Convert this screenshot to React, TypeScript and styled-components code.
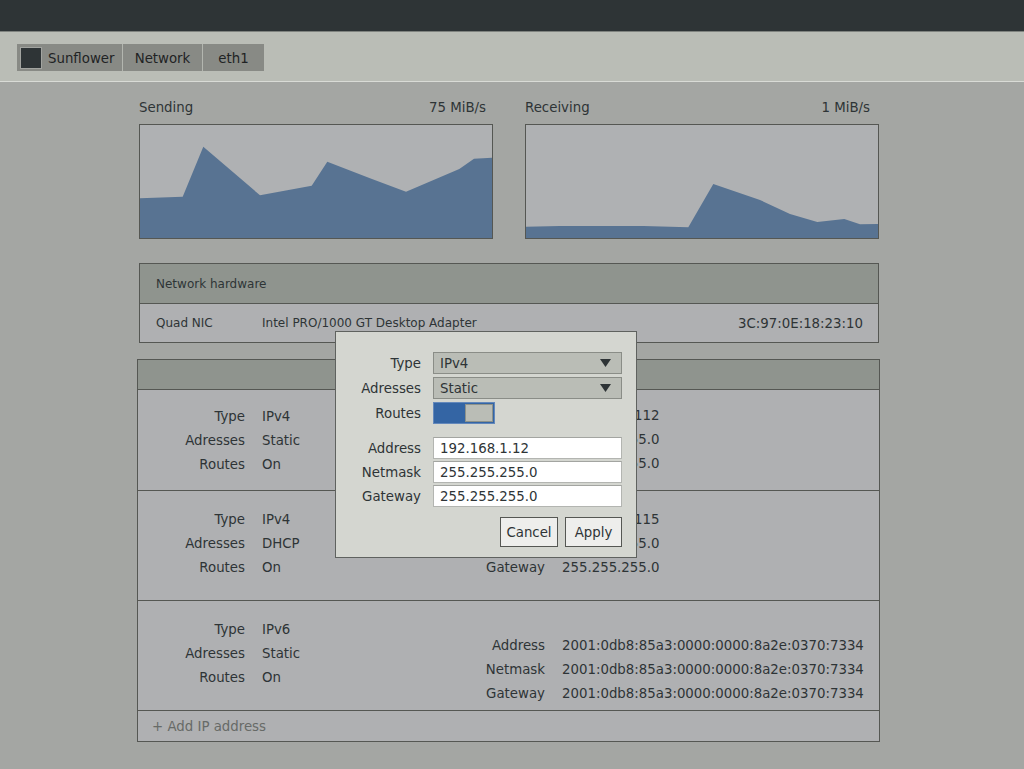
import React from "react";
import styled, { createGlobalStyle } from "styled-components";

const FS = "13.33px";

const Global = createGlobalStyle`
  html, body { margin: 0; padding: 0; background: #a4a6a3; }
  body {
    font-family: "DejaVu Sans", "Liberation Sans", sans-serif;
    color: #2e3436;
    font-size: ${FS};
    min-height: 769px;
  }
  * { box-sizing: border-box; }
`;

const Page = styled.div`
  position: relative;
  min-height: 769px;
  background: #a4a6a3;
`;

const TopBar = styled.div`
  height: 32px;
  background: #2e3436;
  border-bottom: 1px solid #7f837f;
`;

const Toolbar = styled.div`
  height: 50px;
  background: #babdb6;
  border-bottom: 1px solid #d9dbd6;
  padding: 12px 0 0 17px;
`;

const Crumbs = styled.div`
  display: flex;
  height: 27px;
`;

const Crumb = styled.div<{ $w: number; $first?: boolean }>`
  width: ${(p) => p.$w}px;
  height: 27px;
  background: #888a85;
  display: flex;
  align-items: center;
  justify-content: ${(p) => (p.$first ? "flex-start" : "center")};
  padding-left: ${(p) => (p.$first ? "3px" : "0")};
  padding-top: 2px;
  gap: 6px;
  border-left: ${(p) => (p.$first ? "none" : "1px solid #b3b6af")};
  font-size: ${FS};
  color: #1f2324;
`;

const Square = styled.div`
  width: 22px;
  height: 22px;
  margin-top: -2px;
  background: #2e3436;
  border: 1px solid #a2a4a0;
`;

const Content = styled.div`
  padding: 18px 0 0 139px;
  width: ${139 + 740}px;
`;

const Charts = styled.div`
  display: grid;
  grid-template-columns: 354px 354px;
  column-gap: 32px;
`;

const ChartHead = styled.div<{ $pr: number }>`
  display: flex;
  justify-content: space-between;
  height: 16px;
  line-height: 16px;
  padding-right: ${(p) => p.$pr}px;
  margin-bottom: 8px;
  font-size: ${FS};
`;

const ChartBox = styled.div`
  height: 115px;
  border: 1px solid #555753;
  background: #afb1b3;
  svg { display: block; width: 100%; height: 100%; }
`;

const HwTable = styled.div`
  margin-top: 24px;
  border: 1px solid #555753;
  font-size: 12px;
`;

const HwHeader = styled.div`
  height: 40px;
  background: #8f948e;
  border-bottom: 1px solid #555753;
  display: flex;
  align-items: center;
  padding-left: 16px;
`;

const HwRow = styled.div`
  height: 38px;
  background: #afb0b2;
  display: grid;
  grid-template-columns: 106px 1fr auto;
  align-items: center;
  padding: 0 15px 0 16px;
`;

const Mac = styled.span`
  font-size: ${FS};
`;

const IpTable = styled.div`
  margin: 16px -1px 0 -2px;
  border: 1px solid #555753;
`;

const IpHeader = styled.div`
  height: 30px;
  background: #8f948e;
  border-bottom: 1px solid #555753;
`;

const IpRow = styled.div<{ $h: number; $pt: number }>`
  height: ${(p) => p.$h}px;
  background: #afb0b2;
  border-bottom: 1px solid #555753;
  padding-top: ${(p) => p.$pt}px;
  display: flex;
  align-items: flex-start;
`;

const LeftBlock = styled.div`
  width: 322px;
  padding-left: 11px;
  display: grid;
  grid-template-columns: 96px auto;
  column-gap: 17px;
`;

const RightBlock = styled.div<{ $mt: number }>`
  margin-top: ${(p) => p.$mt}px;
  display: grid;
  grid-template-columns: 85px auto;
  column-gap: 17px;
`;

const Key = styled.div`
  text-align: right;
  line-height: 24px;
  height: 24px;
`;

const Val = styled.div`
  line-height: 24px;
  height: 24px;
  white-space: nowrap;
`;

const Footer = styled.div`
  height: 30px;
  background: #afb0b2;
  display: flex;
  align-items: center;
  padding-left: 14px;
  color: #676a67;
`;

const Dialog = styled.div`
  position: absolute;
  left: 335px;
  top: 331px;
  width: 302px;
  background: #d4d6d0;
  border: 1px solid #5f625f;
  padding: 20px 14px 10px 0;
`;

const FieldRow = styled.div<{ $mb: number }>`
  display: grid;
  grid-template-columns: 85px 189px;
  column-gap: 12px;
  align-items: center;
  height: 22px;
  margin-bottom: ${(p) => p.$mb}px;
`;

const FieldLabel = styled.div`
  text-align: right;
  font-size: ${FS};
`;

const Select = styled.div`
  height: 22px;
  background: #babdb6;
  border: 1px solid #8a8d87;
  display: flex;
  align-items: center;
  justify-content: space-between;
  padding: 0 10px 0 6px;
  font-size: ${FS};
`;

const Toggle = styled.div`
  width: 62px;
  height: 22px;
  background: #3465a4;
  border: 1px solid #6388bb;
  display: flex;
  justify-content: flex-end;
  align-items: center;
  padding: 0 1px;
`;

const Knob = styled.div`
  width: 28px;
  height: 18px;
  background: #babdb6;
  border: 1px solid #8d928b;
`;

const TextInput = styled.input`
  height: 22px;
  width: 189px;
  background: #ffffff;
  border: 1px solid #b3b5b1;
  border-top-color: #a3a5a1;
  padding: 0 6px;
  font-family: "DejaVu Sans", "Liberation Sans", sans-serif;
  font-size: ${FS};
  color: #2e3436;
  outline: none;
`;

const ButtonBar = styled.div`
  display: flex;
  justify-content: flex-end;
  gap: 7px;
  margin-left: 97px;
  width: 189px;
`;

const Button = styled.button<{ $w: number }>`
  width: ${(p) => p.$w}px;
  height: 30px;
  background: #eeeeec;
  border: 1px solid #555753;
  border-radius: 0;
  font-family: "DejaVu Sans", "Liberation Sans", sans-serif;
  font-size: ${FS};
  color: #2e3436;
  padding: 0;
`;

const Arrow = () => (
  <svg width="11" height="8" viewBox="0 0 11 8">
    <polygon points="0,0 11,0 5.5,8" fill="#2e3436" />
  </svg>
);

const sendPts =
  "0,73.3 42.7,71.7 63.3,21.7 120,70.3 171.7,60.7 187.3,36.7 230,53.3 266,66.7 319.3,44 334,33.7 352,32.7 352,113 0,113";
const recvPts =
  "0,101.7 34,101 117.3,101 162.3,102.3 187.3,59 234,75 264,89 291.3,97 318.3,94 334,99.3 352,99 352,113 0,113";

const Chart = ({ pts }: { pts: string }) => (
  <ChartBox>
    <svg viewBox="0 0 352 113" preserveAspectRatio="none">
      <polygon points={pts} fill="#587392" />
    </svg>
  </ChartBox>
);

type Pair = [string, string];

const IpEntry = ({
  h,
  pt,
  mt,
  left,
  right,
}: {
  h: number;
  pt: number;
  mt: number;
  left: Pair[];
  right: Pair[];
}) => (
  <IpRow $h={h} $pt={pt}>
    <LeftBlock>
      {left.map(([k, v]) => (
        <React.Fragment key={k}>
          <Key>{k}</Key>
          <Val>{v}</Val>
        </React.Fragment>
      ))}
    </LeftBlock>
    <RightBlock $mt={mt}>
      {right.map(([k, v]) => (
        <React.Fragment key={k}>
          <Key>{k}</Key>
          <Val>{v}</Val>
        </React.Fragment>
      ))}
    </RightBlock>
  </IpRow>
);

const v6 = "2001:0db8:85a3:0000:0000:8a2e:0370:7334";

export default function App() {
  return (
    <Page>
      <Global />
      <TopBar />
      <Toolbar>
        <Crumbs>
          <Crumb $w={105} $first>
            <Square />
            <span>Sunflower</span>
          </Crumb>
          <Crumb $w={80}>
            <span>Network</span>
          </Crumb>
          <Crumb $w={62}>
            <span>eth1</span>
          </Crumb>
        </Crumbs>
      </Toolbar>
      <Content>
        <Charts>
          <div>
            <ChartHead $pr={7}>
              <span>Sending</span>
              <span>75 MiB/s</span>
            </ChartHead>
            <Chart pts={sendPts} />
          </div>
          <div>
            <ChartHead $pr={9}>
              <span>Receiving</span>
              <span>1 MiB/s</span>
            </ChartHead>
            <Chart pts={recvPts} />
          </div>
        </Charts>

        <HwTable>
          <HwHeader>Network hardware</HwHeader>
          <HwRow>
            <span>Quad NIC</span>
            <span>Intel PRO/1000 GT Desktop Adapter</span>
            <Mac>3C:97:0E:18:23:10</Mac>
          </HwRow>
        </HwTable>

        <IpTable>
          <IpHeader />
          <IpEntry
            h={101}
            pt={15}
            mt={-1}
            left={[
              ["Type", "IPv4"],
              ["Adresses", "Static"],
              ["Routes", "On"],
            ]}
            right={[
              ["Address", "192.168.1.112"],
              ["Netmask", "255.255.255.0"],
              ["Gateway", "255.255.255.0"],
            ]}
          />
          <IpEntry
            h={110}
            pt={17}
            mt={0}
            left={[
              ["Type", "IPv4"],
              ["Adresses", "DHCP"],
              ["Routes", "On"],
            ]}
            right={[
              ["Address", "192.168.1.115"],
              ["Netmask", "255.255.255.0"],
              ["Gateway", "255.255.255.0"],
            ]}
          />
          <IpEntry
            h={110}
            pt={17}
            mt={16}
            left={[
              ["Type", "IPv6"],
              ["Adresses", "Static"],
              ["Routes", "On"],
            ]}
            right={[
              ["Address", v6],
              ["Netmask", v6],
              ["Gateway", v6],
            ]}
          />
          <Footer>+ Add IP address</Footer>
        </IpTable>
      </Content>

      <Dialog>
        <FieldRow $mb={3}>
          <FieldLabel>Type</FieldLabel>
          <Select>
            <span>IPv4</span>
            <Arrow />
          </Select>
        </FieldRow>
        <FieldRow $mb={3}>
          <FieldLabel>Adresses</FieldLabel>
          <Select>
            <span>Static</span>
            <Arrow />
          </Select>
        </FieldRow>
        <FieldRow $mb={13}>
          <FieldLabel>Routes</FieldLabel>
          <Toggle>
            <Knob />
          </Toggle>
        </FieldRow>
        <FieldRow $mb={2}>
          <FieldLabel>Address</FieldLabel>
          <TextInput readOnly value="192.168.1.12" />
        </FieldRow>
        <FieldRow $mb={2}>
          <FieldLabel>Netmask</FieldLabel>
          <TextInput readOnly value="255.255.255.0" />
        </FieldRow>
        <FieldRow $mb={10}>
          <FieldLabel>Gateway</FieldLabel>
          <TextInput readOnly value="255.255.255.0" />
        </FieldRow>
        <ButtonBar>
          <Button $w={58}>Cancel</Button>
          <Button $w={57}>Apply</Button>
        </ButtonBar>
      </Dialog>
    </Page>
  );
}
